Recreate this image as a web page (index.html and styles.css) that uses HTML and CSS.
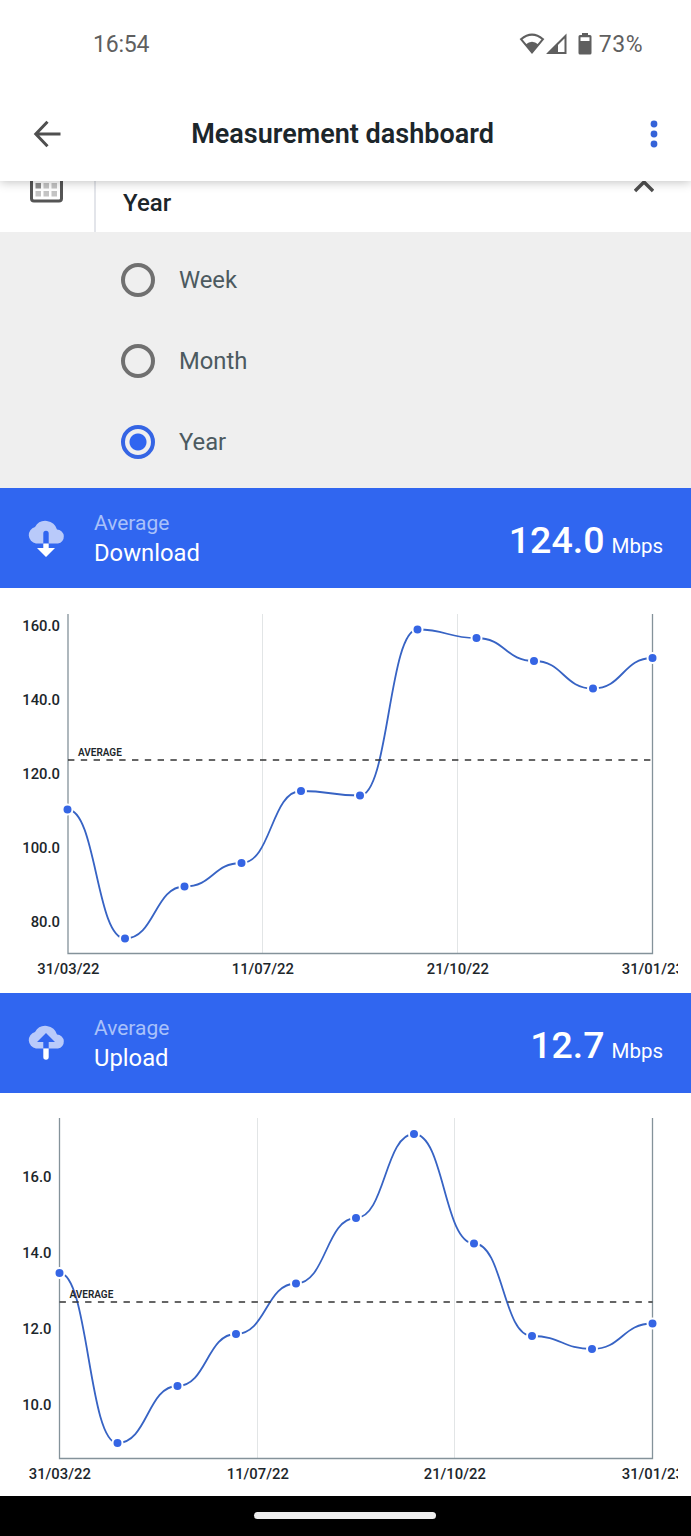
FILE: index.html
```html
<!DOCTYPE html>
<html lang="en">
<head>
<meta charset="UTF-8" />
<meta name="viewport" content="width=device-width, initial-scale=1" />
<title>Measurement dashboard</title>
<link rel="stylesheet" href="styles.css">
</head>
<body>
  <header class="top">
    <div class="status-bar">
      <span class="clock">16:54</span>
      <div class="status-icons">
        <svg class="wifi" width="26" height="22" viewBox="0 0 26 22">
          <path d="M2 6.2 Q13 -3 24 6.2 L13 19.5 Z" fill="none" stroke="#5f5f5f" stroke-width="2" />
          <path d="M6.6 11.4 Q13 6 19.4 11.4 L13 20 Z" fill="#5f5f5f" />
        </svg>
        <svg class="signal" width="21" height="22" viewBox="0 0 21 22">
          <path d="M2.5 20 L19.5 3 V20 Z" fill="none" stroke="#5f5f5f" stroke-width="2" />
          <path d="M1 20.5 L12 9.5 V20.5 Z" fill="#5f5f5f" />
        </svg>
        <svg class="battery" width="14" height="22" viewBox="0 0 14 22">
          <path d="M4 0 H10 V2 H12 Q13.5 2 13.5 3.5 V20 Q13.5 21.5 12 21.5 H2 Q0.5 21.5 0.5 20 V3.5 Q0.5 2 2 2 H4 Z M2.5 4.2 V8 H11.5 V4.2 Z" fill="#5f5f5f" fill-rule="evenodd" />
        </svg>
        <span class="battery-level">73%</span>
      </div>
    </div>
    <div class="app-bar">
      <button class="icon-btn" aria-label="Back">
        <svg width="28" height="28" viewBox="0 0 28 28">
          <path d="M27.5 14 H3 M14.5 1.8 L2.8 14 L14.5 26.2" fill="none" stroke="#4f4f4f" stroke-width="3" />
        </svg>
      </button>
      <h1>Measurement dashboard</h1>
      <button class="icon-btn" aria-label="More options">
        <svg width="8" height="28" viewBox="0 0 8 28">
          <g fill="#3563d8">
            <circle cx="4" cy="4" r="3.4" />
            <circle cx="4" cy="14" r="3.4" />
            <circle cx="4" cy="24" r="3.4" />
          </g>
        </svg>
      </button>
    </div>
  </header>

  <main>
    <div class="period">
      <div class="period-icon">
        <svg width="33" height="22" viewBox="0 0 33 22">
          <path d="M1.5 0 V17.5 Q1.5 20 4 20 H29 Q31.5 20 31.5 17.5 V0" fill="none" stroke="#555" stroke-width="3" />
          <path d="M5.500 2 h5.500 v5.500 h-5.500 Z" fill="#8c8c8c" />
          <path d="M13.500 2 h5.500 v5.500 h-5.500 Z M21.500 2 h5.500 v5.500 h-5.500 Z M5.500 10 h5.500 v5.500 h-5.500 Z M13.500 10 h5.500 v5.500 h-5.500 Z M21.500 10 h5.500 v5.500 h-5.500 Z" fill="#c4c4c4" />
        </svg>
      </div>
      <div class="period-value">Year</div>
      <svg class="chevron" width="20" height="12" viewBox="0 0 20 12">
        <path d="M1 10 L10 1 L19 10" fill="none" stroke="#4f4f4f" stroke-width="3.4" />
      </svg>
    </div>
    <div class="options" role="radiogroup">
      <div class="option" role="radio" aria-checked="false"><span class="radio"></span>Week</div>
      <div class="option" role="radio" aria-checked="false"><span class="radio"></span>Month</div>
      <div class="option" role="radio" aria-checked="true"><span class="radio checked"></span>Year</div>
    </div>

    <section>
      <div class="summary">
        <svg class="cloud" width="38" height="40" viewBox="0 0 38 40">
          <path d="M9 25.500 A8.500 8.500 0 0 1 8 8.900 A12 12 0 0 1 30 11.600 A7 7 0 0 1 31 25.500 Z" fill="#b9cafa" />
          <path d="M16.300 26 V15.500 a2.700 2.700 0 0 1 5.400 0 V26 Z" fill="#3065f0" />
          <path d="M16.300 25.500 H21.700 V30 H28 L19 39 L10 30 H16.300 Z" fill="#fff" />
        </svg>
        <div class="summary-label"><small>Average</small>Download</div>
        <div class="summary-value">124.0<span>Mbps</span></div>
      </div>
      <svg class="chart" id="downloadChart" width="678" height="405"></svg>
    </section>

    <section>
      <div class="summary">
        <svg class="cloud" width="38" height="40" viewBox="0 0 38 40">
          <path d="M9 25.500 A8.500 8.500 0 0 1 8 8.900 A12 12 0 0 1 30 11.600 A7 7 0 0 1 31 25.500 Z" fill="#b9cafa" />
          <path d="M16.300 25.500 V19 H10 L19 10 L28 19 H21.700 V25.500 Z" fill="#3065f0" />
          <path d="M16.300 25.500 H21.700 V34 a2.700 2.700 0 0 1 -5.400 0 Z" fill="#fff" />
        </svg>
        <div class="summary-label"><small>Average</small>Upload</div>
        <div class="summary-value">12.7<span>Mbps</span></div>
      </div>
      <svg class="chart" id="uploadChart" width="678" height="403"></svg>
    </section>
  </main>

  <footer class="nav-bar"><span class="nav-handle"></span></footer>

<script src="charts.js"></script>
</body>
</html>
```
FILE: styles.css
```css
*, *::before, *::after {
  box-sizing: border-box;
}
body {
  margin: 0;
  min-height: 1536px;
  display: flex;
  flex-direction: column;
  font-family: Roboto, sans-serif;
  background: #fff;
  color: #1c262b;
}
h1 {
  flex: 1;
  margin: 0;
  padding-right: 26px;
  text-align: center;
  font-size: 27px;
  font-weight: 600;
}
svg {
  display: block;
  flex: none;
}

/* Status bar and app bar */
.top {
  position: relative;
  height: 181px;
  background: #fff;
  box-shadow: 0 1px 10px rgba(0, 0, 0, 0.25);
}
.status-bar {
  height: 88px;
  padding: 0 48px 0 93px;
  display: flex;
  align-items: center;
  justify-content: space-between;
  color: #5f5f5f;
  font-size: 23px;
  letter-spacing: 0.3px;
}
.clock {
  letter-spacing: -0.2px;
}
.status-icons {
  display: flex;
  align-items: center;
}
.wifi {
  margin-right: 1px;
}
.battery {
  margin: 0 7px 0 11px;
}
.battery-level {
  letter-spacing: 0.5px;
}
.app-bar {
  height: 92px;
  padding: 0 33px;
  display: flex;
  align-items: center;
}
.icon-btn {
  padding: 0;
  border: none;
  background: none;
}

/* Period selector */
.period {
  height: 51px;
  display: flex;
}
.period-icon {
  width: 96px;
  padding-left: 30px;
  border-right: 2px solid #e3e5ea;
}
.period-value {
  flex: 1;
  padding: 7px 0 0 27px;
  font-size: 24px;
  font-weight: 500;
  line-height: 30px;
}
.chevron {
  margin-right: 37px;
}
.options {
  height: 256px;
  padding: 7px 0 0 121px;
  background: #efefef;
}
.option {
  height: 81px;
  display: flex;
  align-items: center;
  gap: 24px;
  color: #4c5a60;
  font-size: 23.8px;
}
.radio {
  width: 34px;
  height: 34px;
  border: 4px solid #707070;
  border-radius: 50%;
}
.radio.checked {
  border-color: #3565e4;
  background: radial-gradient(circle, #3065f0 8px, transparent 9px);
}

/* Average speed bars */
.summary {
  height: 100px;
  padding: 0 28px 0 27px;
  display: flex;
  align-items: center;
  background: #3066f0;
  color: #fff;
}
.summary-label {
  flex: 1;
  margin-left: 29px;
  padding-top: 1px;
  font-size: 23.8px;
  line-height: 30px;
}
.summary-label small {
  display: block;
  font-size: 21px;
  line-height: 29px;
  color: #a9c1fa;
}
.summary-value {
  padding-top: 4px;
  font-size: 37.5px;
  font-weight: 500;
}
.summary-value span {
  margin-left: 7px;
  font-size: 20.5px;
  font-weight: 400;
}

/* Charts */
.chart {
  overflow: hidden;
}
.chart text {
  font-size: 14.8px;
  font-weight: 500;
  fill: #1c262b;
}
.chart .average-label {
  font-size: 10px;
  font-weight: 600;
}
.grid {
  stroke: #e2e5e6;
}
.axis {
  fill: none;
  stroke: #84929a;
  stroke-width: 1.3;
}
.average {
  stroke: #333;
  stroke-width: 1.5;
  stroke-dasharray: 6.4 6.4;
}
.line {
  fill: none;
  stroke: #3763c4;
  stroke-width: 1.8;
}
.dot {
  fill: #3565e4;
  stroke: #fff;
  stroke-width: 2;
}

.nav-bar {
  height: 40px;
  padding: 0 1px 1px 0;
  display: flex;
  align-items: center;
  justify-content: center;
  background: #000;
}
.nav-handle {
  width: 182px;
  height: 7px;
  border-radius: 4px;
  background: #eee;
}
```
FILE: charts.js
```js
(function () {
  const dates = ['31/03/22', '11/07/22', '21/10/22', '31/01/23'];

  function drawChart(id, chart) {
    const left = chart.gridX[0];
    const right = chart.gridX[3];
    let html = '';

    chart.gridX.slice(1, 3).forEach(x => {
      html += `<line class="grid" x1="${x}" x2="${x}" y1="${chart.top}" y2="${chart.bottom}" />`;
    });
    html += `<path class="axis" d="M${left} ${chart.top} V${chart.bottom} H${right} V${chart.top}" />`;

    chart.labels.forEach(([text, y]) => {
      html += `<text x="${left - 8}" y="${y + 5}" text-anchor="end">${text}</text>`;
    });
    dates.forEach((text, i) => {
      html += `<text x="${chart.gridX[i] + 0.3}" y="${chart.bottom + 20.5}" text-anchor="middle">${text}</text>`;
    });

    // Horizontal bezier between the measurements
    const p = chart.points;
    let d = `M${p[0][0]} ${p[0][1]}`;
    for (let i = 1; i < p.length; i++) {
      const mid = (p[i - 1][0] + p[i][0]) / 2;
      d += ` C${mid} ${p[i - 1][1]} ${mid} ${p[i][1]} ${p[i][0]} ${p[i][1]}`;
    }
    html += `<path class="line" d="${d}" />`;
    p.forEach(([x, y]) => {
      html += `<circle class="dot" cx="${x}" cy="${y}" r="5" />`;
    });

    html += `<line class="average" x1="${left}" x2="${right}" y1="${chart.average}" y2="${chart.average}" />`;
    html += `<text class="average-label" x="${left + 10}" y="${chart.average - 4.5}">AVERAGE</text>`;

    document.getElementById(id).innerHTML = html;
  }

  drawChart('downloadChart', {
    top: 26, bottom: 365.5, average: 172,
    gridX: [68, 262.5, 457.5, 652.5],
    labels: [['160.0', 38], ['140.0', 112], ['120.0', 186], ['100.0', 260], ['80.0', 334]],
    points: [[67.5, 221.5], [125, 350.5], [184.5, 298.5], [241.5, 275], [301, 203], [360, 207.5],
      [417.5, 41.5], [476.5, 50], [534, 73], [593, 100.5], [652.5, 70]]
  });

  drawChart('uploadChart', {
    top: 25, bottom: 365.5, average: 209,
    gridX: [59.5, 257.5, 454.5, 652.5],
    labels: [['16.0', 84], ['14.0', 160], ['12.0', 236], ['10.0', 312]],
    points: [[59.5, 180], [117.5, 350], [177.5, 293], [236, 241], [296, 190.5], [356, 125],
      [414, 41], [474, 150.5], [532, 243], [592, 256], [652.5, 230.5]]
  });
})();
```
